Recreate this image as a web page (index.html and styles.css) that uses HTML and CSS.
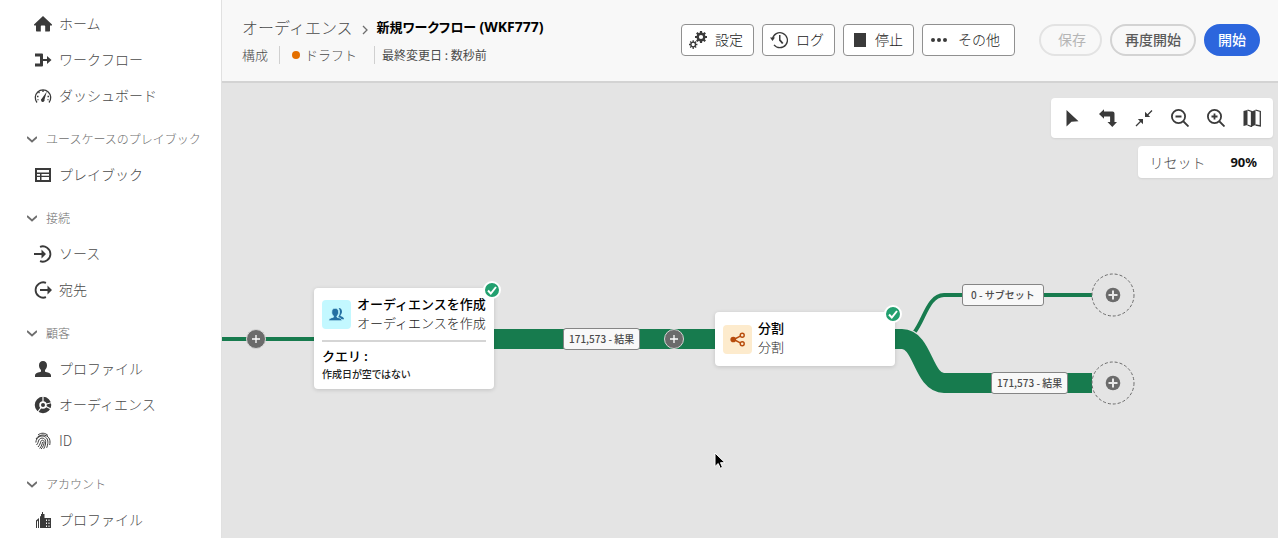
FILE: index.html
```
<!DOCTYPE html>
<html lang="ja">
<head>
<meta charset="utf-8">
<meta name="viewport" content="width=device-width, initial-scale=1">
<title>新規ワークフロー (WKF777)</title>
<link rel="stylesheet" href="styles.css">
</head>
<body>
<div class="app">
  <nav class="sidebar" aria-label="メイン">
    <a class="nav-item" href="#"><svg class="icon" viewBox="0 0 18 18"><path d="M9 1 18 9.600c.3.4 0 .9-.4.9H16v5.300a.7.7 0 0 1-.7.7H11.200V11.200a.7.7 0 0 0-.7-.7h-3a.7.7 0 0 0-.7.7v5.300H2.700a.7.7 0 0 1-.7-.7V10.500H.4c-.5 0-.7-.5-.4-.9Z"/></svg>ホーム</a>
    <a class="nav-item" href="#"><svg class="icon" viewBox="0 0 18 18"><path d="M1 2.500h7a1 1 0 0 1 1 1V8h4V5L17.500 9 13 13V10H9v4.500a1 1 0 0 1-1 1H1v-3h5v-7H1Z"/></svg>ワークフロー</a>
    <a class="nav-item" href="#"><svg class="icon" viewBox="0 0 18 18"><path class="line" d="M3 15.500a7.700 7.700 0 1 1 12 0" /><path class="line" d="M9 3v2M4.500 5l1 1M3 9.500h1.500M13.500 9.500H15M3.500 13l1-.5M14.500 13l-1-.5"/><path d="m12.800 4.500-2.300 8a1.800 1.800 0 1 1-2.600-.9Z"/></svg>ダッシュボード</a>
    <button class="nav-heading" type="button"><svg class="chevron" viewBox="0 0 10 10"><path d="m0 3 5 4.500L10 3"/></svg>ユースケースのプレイブック</button>
    <a class="nav-item" href="#"><svg class="icon" viewBox="0 0 18 18"><path fill-rule="evenodd" d="M1 2h16v14H1ZM3 4v2.500h12V4ZM3 8v1.800h3V8Zm0 3v3h3v-3Zm4.500-3v1.800H15V8Zm0 3v3H15v-3Z"/></svg>プレイブック</a>
    <button class="nav-heading" type="button"><svg class="chevron" viewBox="0 0 10 10"><path d="m0 3 5 4.500L10 3"/></svg>接続</button>
    <a class="nav-item" href="#"><svg class="icon" viewBox="0 0 18 18"><path class="line thick" d="M6 1.800A7.700 7.700 0 1 1 6 16.200"/><path d="M0 8h7.500V4.500L12 9l-4.500 4.500V10H0Z"/></svg>ソース</a>
    <a class="nav-item" href="#"><svg class="icon" viewBox="0 0 18 18"><path class="line thick" d="M12 1.800A7.700 7.700 0 1 0 12 16.200"/><path d="M6 8h7.500V4.500L18 9l-4.500 4.500V10H6Z"/></svg>宛先</a>
    <button class="nav-heading" type="button"><svg class="chevron" viewBox="0 0 10 10"><path d="m0 3 5 4.500L10 3"/></svg>顧客</button>
    <a class="nav-item" href="#"><svg class="icon" viewBox="0 0 18 18"><path d="M9 1c2.500 0 4 1.700 4 4.300 0 2-.8 3.700-2 4.700v1.300c0 .4.300.6.700.7 3.500.5 5.300 1.800 5.300 3.500V17H1v-1.500C1 13.800 2.800 12.500 6.300 12c.4-.1.700-.3.700-.7V10C5.800 9 5 7.300 5 5.300 5 2.700 6.500 1 9 1Z"/></svg>プロファイル</a>
    <a class="nav-item" href="#"><svg class="icon" viewBox="0 0 18 18"><circle class="line ring" cx="9" cy="9" r="6"/><path class="cut" d="M9 9V0M9 9l9-2.500M9 9 3 17M9 9 17 13"/><circle cx="9" cy="9" r="2"/></svg>オーディエンス</a>
    <a class="nav-item" href="#"><svg class="icon" viewBox="0 0 18 18"><path class="line fine" d="M4 3c3-2.600 7.500-2.300 10 .6M2 7C5 1.800 13 1.500 15.500 7c.7 2 .6 4 .2 6M1.800 10.500C2.500 4.500 7 3.600 9.500 4.200c3.600.9 4.700 4 4.300 7.300-.2 1.500-.6 3-1.100 4.300M2.500 13c1.700-1.500 1.600-3.700 2.500-5.200C6.300 5.700 9.500 5.500 11 7.500c1.500 2.300.3 6.500-1.300 9.300M4 15c2-2 2.300-4 2.800-5.500.7-1.900 3-1.600 3.300.3.300 2.300-1.400 5.500-3 7.200M5.700 16.500C7.600 14 8.300 12 8.500 10"/></svg>ID</a>
    <button class="nav-heading" type="button"><svg class="chevron" viewBox="0 0 10 10"><path d="m0 3 5 4.500L10 3"/></svg>アカウント</button>
    <a class="nav-item" href="#"><svg class="icon" viewBox="0 0 18 18"><path fill-rule="evenodd" d="M7 3h1V1h1v2h1.500v4H17v10H6V5.500L7 5ZM12 8.500V10h1V8.500Zm2.500 0V10h1V8.500Zm-2.500 3V13h1v-1.500Zm2.500 0V13h1v-1.500Zm-2.500 3V16h1v-1.500Zm2.500 0V16h1v-1.500ZM5 7v10H4V9.500L3 10.500V17H2V9.500Z"/></svg>プロファイル</a>
  </nav>

  <main class="main">
    <header class="header">
      <div class="title-block">
        <div class="breadcrumb">
          <a href="#">オーディエンス</a>
          <svg class="crumb-sep" viewBox="0 0 6 10"><path d="m1 1 4 4-4 4"/></svg>
          <h1>新規ワークフロー <span class="workflow-id">(WKF777)</span></h1>
        </div>
        <div class="meta">
          <span class="meta-item">構成</span>
          <span class="meta-item status"><span class="dot"></span>ドラフト</span>
          <span class="meta-item modified">最終変更日 : 数秒前</span>
        </div>
      </div>
      <div class="actions">
        <button class="tool-button" type="button"><svg class="icon" viewBox="0 0 18 18"><circle class="gear" cx="12" cy="6" r="3.300"/><path class="teeth" d="M12 0v3M12 9v3M6 6h3M15 6h3M7.800 1.800l2 2M14.200 8.200l2 2M16.200 1.800l-2 2M9.800 8.200l-2 2"/><circle class="line" cx="4.200" cy="13.500" r="2.300"/><path class="line" d="M4.200 9.200v2M4.200 16v2M0 13.500h2M6.400 13.500h2M1.200 10.500l1.400 1.400M5.800 15.100l1.400 1.400M7.200 10.500l-1.400 1.400M2.600 15.100l-1.400 1.400"/></svg>設定</button>
        <button class="tool-button" type="button"><svg class="icon" viewBox="0 0 18 18"><path class="line" d="M2.500 8A7.500 7.500 0 1 1 4 13.800"/><path d="M0 6.500h5L2.500 10ZM9 4h1.500v4.500l3 3.500-1.500 1L9 9.500Z"/></svg>ログ</button>
        <button class="tool-button" type="button"><svg class="icon stop" viewBox="0 0 18 18"><path d="M3 2h12v14H3Z"/></svg>停止</button>
        <button class="tool-button more" type="button"><svg class="icon" viewBox="0 0 18 18"><circle cx="3" cy="9" r="2"/><circle cx="9" cy="9" r="2"/><circle cx="15" cy="9" r="2"/></svg>その他</button>
        <div class="primary-actions">
          <button class="pill save" type="button" disabled>保存</button>
          <button class="pill" type="button">再度開始</button>
          <button class="pill start" type="button">開始</button>
        </div>
      </div>
    </header>

    <section class="canvas" aria-label="ワークフロー">
      <svg class="edges" aria-hidden="true">
        <path class="edge thin" d="M0 256H92"/>
        <path class="edge thin" d="M673 256H680C701 256 701 212 722 212H870"/>
        <path class="halo" d="M673 256H680C701 256 701 300 722 300"/>
        <path class="edge wide" d="M272 256H493M673 256H680C701 256 701 300 722 300H870"/>
      </svg>

      <button class="add add-1" type="button" aria-label="アクティビティを追加"><svg viewBox="0 0 10 10"><path d="M5 1v8M1 5h8"/></svg></button>
      <button class="add add-2" type="button" aria-label="アクティビティを追加"><svg viewBox="0 0 10 10"><path d="M5 1v8M1 5h8"/></svg></button>

      <article class="node node-audience">
        <div class="node-head">
          <span class="node-icon blue"><svg viewBox="0 0 18 18"><path d="M11.200 2c2.500 0 3.600 1.700 3.600 3.700 0 1.700-.7 3-1.600 3.900v.8c0 .6 3.800 1.200 3.800 3.600V14h-3c-.6-1-1.800-1.700-3.400-2.200C12.700 9.500 13.500 5 11.200 2Z"/><path class="front" d="M7.500 2.500c2.400 0 3.700 1.600 3.700 4 0 1.700-.7 3.200-1.800 4v.9c0 .4.300.6.600.7 2.900.4 4.500 1.400 4.500 2.900v.5H1V15c0-1.500 1.500-2.500 4.300-2.900.4-.1.600-.3.600-.7v-.9C4.700 9.700 4 8.200 4 6.500c0-2.400 1.200-4 3.500-4Z"/></svg></span>
          <div class="node-title"><h2>オーディエンスを作成</h2><p>オーディエンスを作成</p></div>
        </div>
        <div class="node-body"><h3>クエリ :</h3><p>作成日が空ではない</p></div>
        <svg class="check" viewBox="0 0 18 18"><circle cx="9" cy="9" r="8"/><path d="m5 9.500 2.800 3L13 6"/></svg>
      </article>

      <article class="node node-split">
        <div class="node-head">
          <span class="node-icon orange"><svg viewBox="0 0 18 18"><path class="share" d="M5 9l7-3.500M5 9l7 3.500"/><circle cx="4.500" cy="9" r="3"/><circle class="share" cx="14" cy="4.500" r="2.100"/><circle class="share" cx="14" cy="13.500" r="2.100"/></svg></span>
          <div class="node-title"><h2>分割</h2><p>分割</p></div>
        </div>
        <svg class="check" viewBox="0 0 18 18"><circle cx="9" cy="9" r="8"/><path d="m5 9.500 2.800 3L13 6"/></svg>
      </article>

      <span class="edge-label label-1">171,573 - 結果</span>
      <span class="edge-label label-2">0 - サブセット</span>
      <span class="edge-label label-3">171,573 - 結果</span>

      <button class="end end-1" type="button" aria-label="アクティビティを追加"><svg viewBox="0 0 44 44"><circle class="dash" cx="22" cy="22" r="21"/><circle class="disc" cx="22" cy="22" r="7.300"/><path d="M22 17.500v9M17.500 22h9"/></svg></button>
      <button class="end end-2" type="button" aria-label="アクティビティを追加"><svg viewBox="0 0 44 44"><circle class="dash" cx="22" cy="22" r="21"/><circle class="disc" cx="22" cy="22" r="7.300"/><path d="M22 17.500v9M17.500 22h9"/></svg></button>

      <div class="floating">
        <div class="panel tools">
          <button type="button" aria-label="選択"><svg class="icon" viewBox="0 0 18 18"><path d="M3.500 1 15.500 12.200 8.500 12.700 3.500 17.500Z"/></svg></button>
          <button type="button" aria-label="向きを変更"><svg class="icon" viewBox="0 0 18 18"><path d="M0 5 5 .3V2.500h8.500a2 2 0 0 1 2 2V13H18l-4.700 5L8.500 13h2.600V7.500H5v2.200Z"/></svg></button>
          <button type="button" aria-label="画面に合わせる"><svg class="icon" viewBox="0 0 18 18"><path class="line" d="m17 1.500-5 5M1 17l5-5"/><path d="M10 2.800V8h5.200ZM8 15.200V10H2.800Z"/></svg></button>
          <button type="button" aria-label="ズームアウト"><svg class="icon" viewBox="0 0 18 18"><circle class="line thick" cx="7.500" cy="7.500" r="6.600"/><path class="line thick" d="m12 12 5.500 5.500M4.500 7.500h6"/></svg></button>
          <button type="button" aria-label="ズームイン"><svg class="icon" viewBox="0 0 18 18"><circle class="line thick" cx="7.500" cy="7.500" r="6.600"/><path class="line thick" d="m12 12 5.500 5.500M4.500 7.500h6M7.500 4.500v6"/></svg></button>
          <button type="button" aria-label="マップ"><svg class="icon" viewBox="0 0 18 18"><path d="M.5 2 4.500 1v15l-4 1ZM8.500 2.500l4-1.500v15l-4 1.500Z"/><path class="line" d="m4.500 1 4 1.500v15l-4-1.500M12.500 1l4.800 1.500V17l-4.800-1"/></svg></button>
        </div>
        <div class="panel zoom"><button type="button">リセット</button><output>90%</output></div>
      </div>

      <svg class="pointer" viewBox="0 0 12 18" aria-hidden="true"><path d="M1 1v13.500l3.200-3 2.100 4.800 2.200-1-2-4.600H11Z"/></svg>
    </section>
  </main>
</div>
</body>
</html>
```
FILE: styles.css
```
* { box-sizing: border-box; }

body {
  margin: 0;
  font-family: "Noto Sans CJK JP", sans-serif;
  font-size: 14px;
  font-weight: 300;
  color: #4b4b4b;
}

h1, h2, h3, p { margin: 0; }
a { color: inherit; text-decoration: none; }

button {
  margin: 0;
  padding: 0;
  border: 0;
  background: none;
  font: inherit;
  color: inherit;
}

svg { display: block; flex: none; }

.icon { width: 18px; height: 18px; fill: #3a3a3a; }
.icon .line { fill: none; stroke: #3a3a3a; stroke-width: 1.3; }
.icon .line.thick { stroke-width: 1.8; }
.icon .line.fine { stroke-width: 1; }
.icon .line.ring { stroke-width: 4.5; }
.icon .cut { stroke: #fff; stroke-width: 1.2; }
.icon .gear { fill: none; stroke: #3a3a3a; stroke-width: 2.4; }
.icon .teeth { stroke: #3a3a3a; stroke-width: 2.2; }

.app {
  display: grid;
  grid-template-columns: 222px 1fr;
  height: 100vh;
  overflow: hidden;
}

.sidebar {
  display: flex;
  flex-direction: column;
  padding-top: 6px;
  border-right: 1px solid #e1e1e1;
  background: #fff;
  overflow: hidden;
}

.nav-item {
  display: flex;
  flex: none;
  align-items: center;
  gap: 7px;
  height: 36px;
  padding: 0 0 2px 34px;
}

.nav-heading {
  display: flex;
  flex: none;
  align-items: center;
  gap: 9px;
  height: 36px;
  margin-top: 7px;
  padding: 0 0 2px 27px;
  font-size: 12px;
  color: #6e6e6e;
}

.sidebar svg { margin-top: 2px; }
.chevron { width: 10px; height: 10px; fill: none; stroke: #6e6e6e; stroke-width: 1.8; }

.main { display: flex; flex-direction: column; min-width: 0; }

.header {
  display: flex;
  justify-content: space-between;
  align-items: flex-start;
  padding: 16px 18px 16px 20px;
  border-bottom: 2px solid #d3d3d3;
  background: #f8f8f8;
  white-space: nowrap;
}

.title-block { display: flex; flex-direction: column; gap: 7px; }
.breadcrumb { display: flex; align-items: center; gap: 9px; height: 22px; }
.breadcrumb a { font-size: 16px; line-height: 24px; }
.breadcrumb h1 { font-family: "Noto Sans", "Noto Sans CJK JP", sans-serif; font-size: 13px; font-weight: 700; line-height: 22px; color: #000; font-feature-settings: "palt"; }
.workflow-id { font-size: 14px; }
.crumb-sep { width: 6px; height: 10px; margin-top: 6px; fill: none; stroke: #6e6e6e; stroke-width: 1.3; }

.meta { display: flex; align-items: center; font-size: 13px; line-height: 18px; height: 20px; }
.meta-item + .meta-item { margin-left: 11px; padding-left: 12px; border-left: 1px solid #d0d0d0; }
.status { display: flex; align-items: center; gap: 5px; }
.dot { width: 8px; height: 8px; border-radius: 50%; background: #e46f00; }
.modified { font-weight: 400; font-size: 12px; }
.meta-item + .meta-item.modified { margin-left: 17px; padding-left: 7px; font-feature-settings: "palt"; }

.actions { display: flex; gap: 8px; padding-top: 8px; }
.primary-actions { display: flex; gap: 8px; margin-left: 16px; }

.tool-button {
  display: flex;
  align-items: center;
  gap: 8px;
  height: 32px;
  padding: 0 10px 2px 7px;
  border: 1px solid #909090;
  border-radius: 4px;
  background: #fff;
  color: #222;
}
.tool-button .icon { margin-top: 2px; }
.tool-button .stop { margin-right: -2px; }
.tool-button.more { padding-right: 14px; gap: 10px; }

.pill {
  height: 32px;
  padding: 0 13px 2px;
  border: 2px solid #d3d3d3;
  border-radius: 16px;
  font-weight: 500;
  color: #5a5a5a;
}
.pill.save { padding-left: 17px; padding-right: 14px; border-color: #e3e3e3; font-weight: 400; color: #b5b5b5; }
.pill.start { padding-left: 12px; padding-right: 12px; border-color: #2c66dd; background: #2c66dd; color: #fff; }

.canvas { position: relative; flex: 1; min-height: 0; background: #e4e4e4; overflow: hidden; }

.edges { position: absolute; inset: 0; width: 100%; height: 100%; }
.edge { fill: none; stroke: #177b4e; }
.edge.thin { stroke-width: 4; }
.edge.wide { stroke-width: 20; }
.halo { fill: none; stroke: #e4e4e4; stroke-width: 22; }

.add {
  position: absolute;
  display: grid;
  place-items: center;
  width: 20px;
  height: 20px;
  border: 1px solid #d5d5d5;
  border-radius: 50%;
  background: #6b6b6b;
}
.add svg { width: 10px; height: 10px; stroke: #fff; stroke-width: 1.3; }
.add-1 { left: 24px; top: 246px; }
.add-2 { left: 442px; top: 246px; }

.node {
  position: absolute;
  width: 180px;
  padding: 8px;
  border-radius: 4px;
  background: #fff;
  box-shadow: 0 1px 4px rgba(0, 0, 0, 0.15);
  white-space: nowrap;
}
.node-audience { left: 92px; top: 205px; }
.node-split { left: 493px; top: 229px; }

.node-head { display: flex; align-items: center; gap: 6px; height: 38px; }
.node-icon { display: grid; flex: none; place-items: center; width: 29px; height: 29px; border-radius: 4px; }
.node-icon svg { width: 17px; height: 17px; }
.blue { background: #c3f8ff; fill: #246fa2; }
.front { stroke: #c3f8ff; stroke-width: 0.7; }
.orange { background: #fdebcd; fill: #b74b0b; }
.share { fill: none; stroke: #b74b0b; stroke-width: 1.5; }
.node-title { padding-bottom: 4px; font-size: 13px; line-height: 19px; }
.node-title h2 { font-size: 13px; font-weight: 500; color: #000; }
.node-audience .node-head { height: 46px; padding-bottom: 7px; border-bottom: 2px solid #d5d5d5; }
.node-title p { color: #222; }
.node-body { padding-top: 4px; }
.node-body h3 { font-size: 13px; line-height: 20px; font-weight: 500; color: #000; }
.node-body p { font-size: 10px; line-height: 15px; font-weight: 500; color: #222; font-feature-settings: "palt"; }

.check { position: absolute; right: -7px; top: -7px; width: 18px; height: 18px; }
.check circle { fill: #22a06f; stroke: #fff; stroke-width: 2; }
.check path { fill: none; stroke: #fff; stroke-width: 2; }

.edge-label {
  position: absolute;
  padding: 0 5px;
  border: 1px solid #858585;
  border-radius: 3px;
  background: #f8f8f8;
  font-size: 10px;
  line-height: 20px;
  font-weight: 500;
  color: #4b4b4b;
  white-space: nowrap;
}
.label-1 { left: 341px; top: 245px; }
.label-2 { left: 740px; top: 201px; padding: 0 8px; }
.label-3 { left: 769px; top: 289px; }

.end { position: absolute; left: 869px; width: 44px; height: 44px; }
.end-1 { top: 190px; }
.end-2 { top: 278px; }
.end svg { width: 44px; height: 44px; }
.dash { fill: #e4e4e4; stroke: #6b6b6b; stroke-width: 1; stroke-dasharray: 3 2; }
.disc { fill: #6b6b6b; }
.end path { stroke: #e8e8e8; stroke-width: 2; }

.floating { position: absolute; right: 5px; top: 15px; display: flex; flex-direction: column; align-items: flex-end; gap: 8px; }
.panel { display: flex; align-items: center; border-radius: 4px; background: #fff; box-shadow: 0 1px 2px rgba(0, 0, 0, 0.08); }
.tools { gap: 18px; height: 40px; padding: 0 12px; }
.zoom { gap: 25px; height: 32px; padding: 0 16px 1px 11px; }
.zoom output { font-family: "Noto Sans", sans-serif; font-size: 13px; font-weight: 700; color: #111; }

.pointer { position: absolute; left: 492px; top: 369px; width: 12px; height: 18px; }
.pointer path { fill: #000; stroke: #fff; stroke-width: 1; }
```
